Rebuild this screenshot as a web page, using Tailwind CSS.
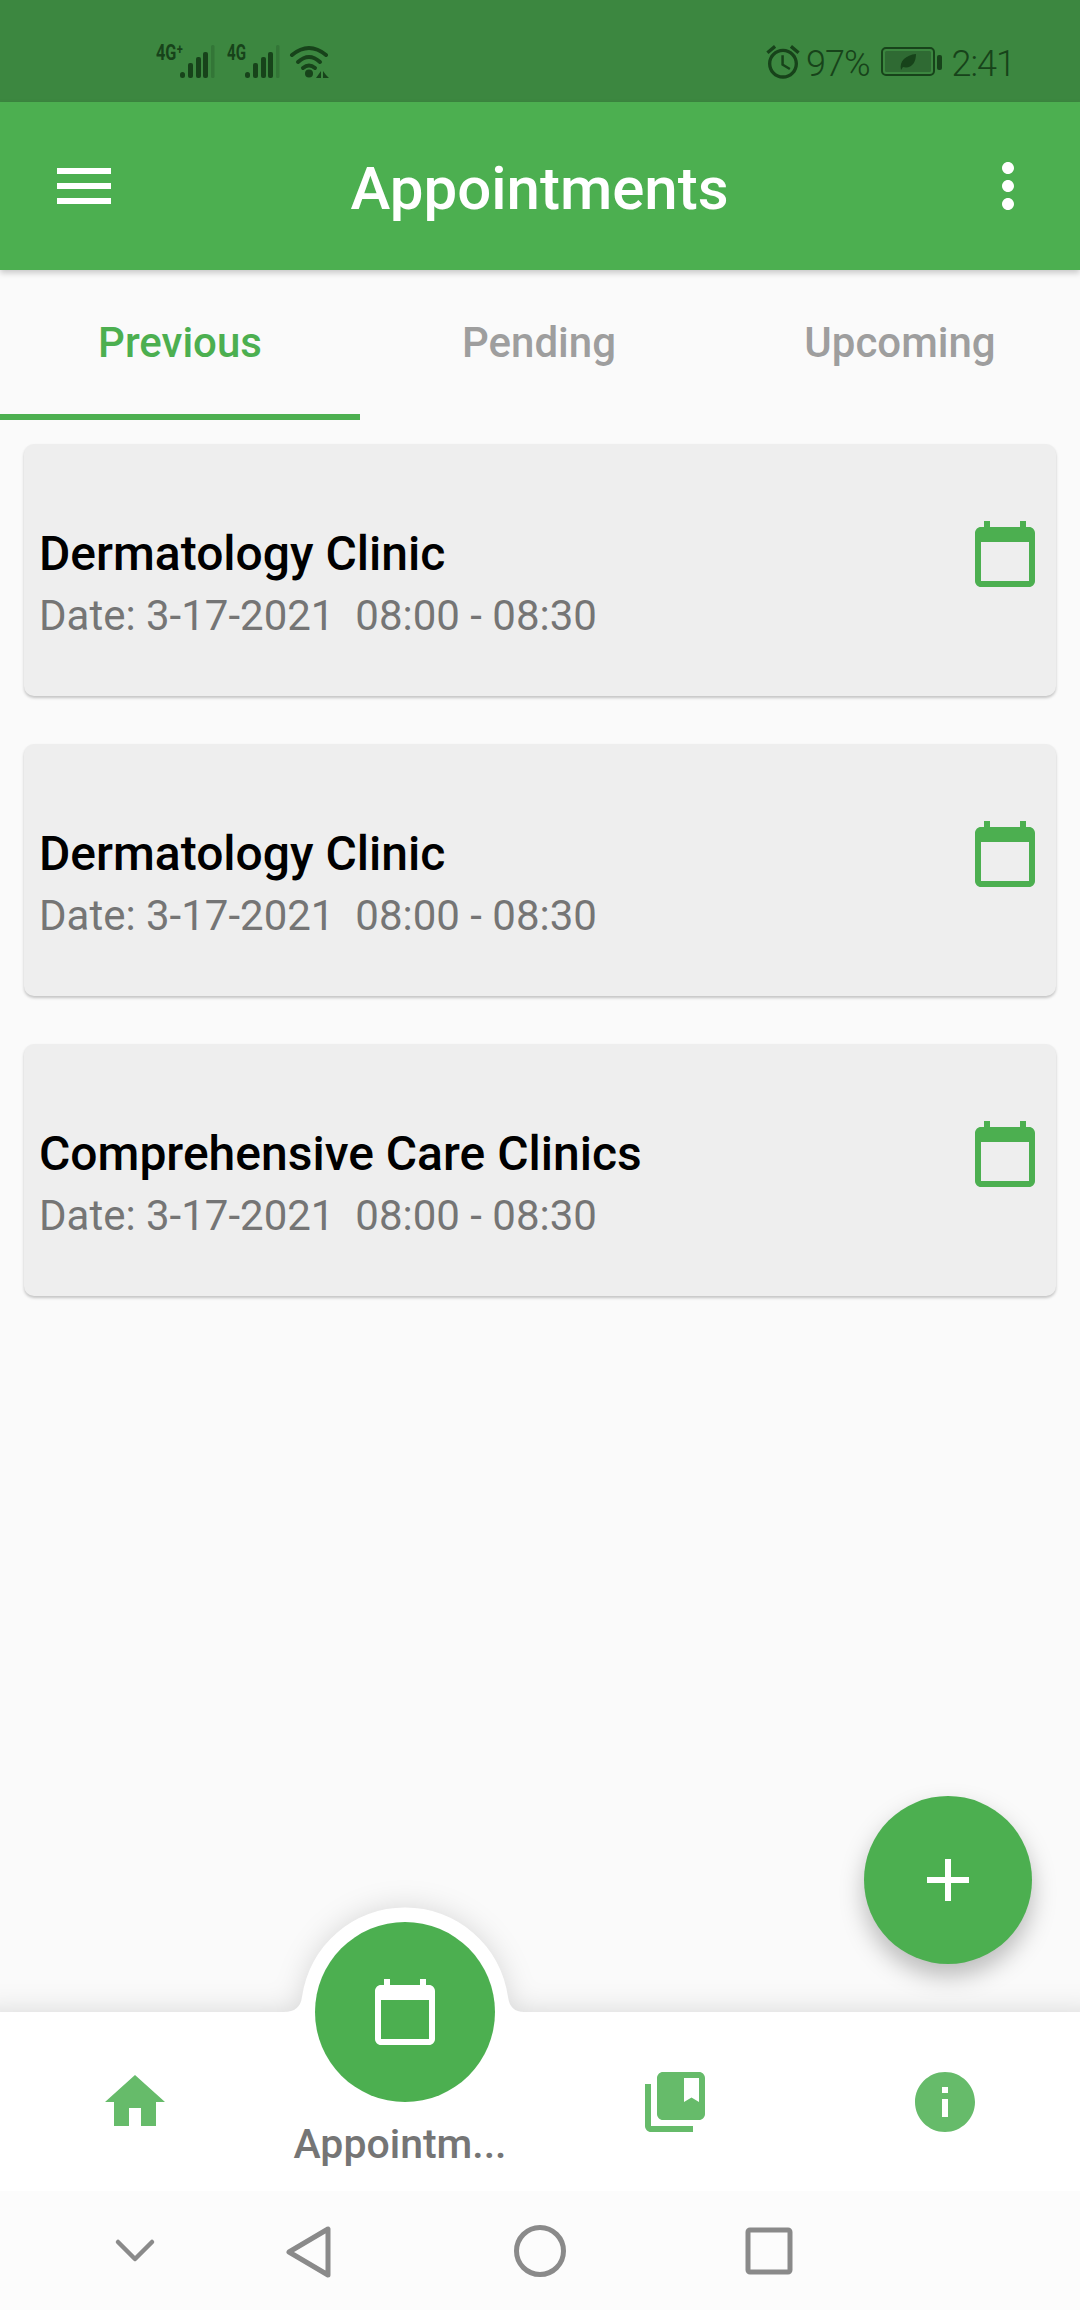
<!DOCTYPE html>
<html lang="en">
<head>
<meta charset="utf-8">
<title>Appointments</title>
<script src="https://cdn.jsdelivr.net/npm/@tailwindcss/browser@4"></script>
</head>
<body class="m-0 bg-[#fafafa]">
<div class="w-[1080px] h-[2310px] flex flex-col overflow-hidden bg-[#fafafa] font-['Roboto',sans-serif]">

  <!-- Status bar -->
  <div class="relative h-[102px] shrink-0 flex items-start justify-between bg-[#3c8740] pl-[156px] pr-[65px] text-[#17431a]">
    <svg class="mt-[40px]" width="175" height="40" viewBox="156 40 175 40" fill="#17431a">
      <text x="156" y="60" font-family="Roboto, 'DejaVu Sans', sans-serif" font-weight="700" font-size="22" textLength="27" lengthAdjust="spacingAndGlyphs">4G⁺</text>
      <rect x="180" y="72" width="5" height="6" rx="2.5"/><rect x="188" y="63" width="5" height="15" rx="2"/><rect x="196" y="57" width="5" height="21" rx="2"/><rect x="203" y="52" width="5" height="26" rx="2"/><rect x="211" y="45" width="3.5" height="33" rx="1.5" opacity=".25"/>
      <text x="227" y="60" font-family="Roboto, sans-serif" font-weight="700" font-size="22" textLength="19" lengthAdjust="spacingAndGlyphs">4G</text>
      <rect x="245" y="72" width="5" height="6" rx="2.5"/><rect x="253" y="63" width="5" height="15" rx="2"/><rect x="261" y="57" width="5" height="21" rx="2"/><rect x="268" y="52" width="5" height="26" rx="2"/><rect x="276" y="45" width="3.5" height="33" rx="1.5" opacity=".25"/>
      <g fill="none" stroke="#17431a" stroke-width="4" stroke-linecap="round">
        <path d="M292 55Q309 41 326 55"/><path d="M298 62Q309 52 320 62"/><path d="M303 68Q309 63 315 68"/>
      </g>
      <circle cx="309" cy="73.500" r="4"/>
      <path d="M321 71v7h-5zM323 71v7h6l-3 -3z"/>
    </svg>
    <div class="flex items-start">
      <svg class="mt-[42px] mr-[3px]" width="40" height="40" viewBox="0 0 24 24" fill="#17431a"><path d="M22 5.720l-4.600-3.860-1.290 1.530 4.600 3.860L22 5.720zM7.880 3.390L6.600 1.860 2 5.710l1.290 1.530 4.590-3.850zM12.500 8H11v6l4.750 2.850.75-1.230-4-2.370V8zM12 4c-4.970 0-9 4.030-9 9s4.030 9 9 9c4.970 0 9-4.030 9-9s-4.030-9-9-9zm0 16c-3.870 0-7-3.130-7-7s3.130-7 7-7 7 3.130 7 7-3.130 7-7 7z"/></svg>
      <span class="mt-[44px] text-[36px] leading-[40px] font-light tracking-[-1px] mr-[11px]">97%</span>
      <svg class="mt-[47px] mr-[9px]" width="62" height="30" viewBox="0 0 62 30">
        <rect x="1" y="1" width="52" height="27" rx="4" fill="none" stroke="#17431a" stroke-width="2"/>
        <rect x="4" y="4" width="46" height="21" rx="1.500" fill="#2f6a33"/>
        <rect x="56" y="8" width="5" height="15" rx="2" fill="#17431a"/>
        <path d="M20 23C18 14 25 8 35 7 35 16 30 22 22 20Z" fill="#17431a"/>
      </svg>
      <span class="mt-[44px] text-[36px] leading-[40px] font-light tracking-[-1px]">2:41</span>
    </div>
  </div>

  <!-- App bar -->
  <div class="relative z-10 h-[168px] shrink-0 flex items-center bg-[#4caf50] pl-[48px] pr-[36px] shadow-[0_3px_6px_rgba(0,0,0,0.2)]">
    <svg class="shrink-0" width="72" height="72" viewBox="0 0 24 24" fill="#fff"><path d="M3 18h18v-2H3v2zm0-5h18v-2H3v2zm0-7v2h18V6H3z"/></svg>
    <div class="flex-1 pt-[5px] pr-[13px] text-center text-white text-[60px] leading-[70px] font-medium">Appointments</div>
    <svg class="shrink-0" width="72" height="72" viewBox="0 0 24 24" fill="#fff"><path d="M12 8c1.100 0 2-.9 2-2s-.9-2-2-2-2 .9-2 2 .9 2 2 2zm0 2c-1.100 0-2 .9-2 2s.9 2 2 2 2-.9 2-2-.9-2-2-2zm0 6c-1.100 0-2 .9-2 2s.9 2 2 2 2-.9 2-2-.9-2-2-2z"/></svg>
  </div>

  <!-- Tabs -->
  <div class="h-[150px] shrink-0 grid grid-cols-3 text-center text-[42px] leading-[50px] font-medium">
    <div class="pt-[48px] border-b-[6px] border-[#4caf50] text-[#4caf50]">Previous</div>
    <div class="pt-[48px] pr-[2px] text-[#9e9e9e]">Pending</div>
    <div class="pt-[48px] text-[#9e9e9e]">Upcoming</div>
  </div>

  <!-- List -->
  <div class="relative flex-1 px-[24px] pt-[24px] flex flex-col gap-[48px]">
    <div class="h-[252px] rounded-[10px] bg-[#eeeeee] shadow-[0_2px_3px_rgba(0,0,0,0.22)] flex justify-between pl-[15px] pr-[15px]">
      <div class="pt-[82px]">
        <div class="text-[48px] leading-[56px] font-medium text-black">Dermatology Clinic</div>
        <div class="mt-[9px] text-[42px] leading-[50px] text-[#757575] whitespace-pre">Date: 3-17-2021  08:00 - 08:30</div>
      </div>
      <svg class="mt-[74px]" width="72" height="72" viewBox="0 0 24 24" fill="#4caf50"><path d="M20 3h-1V1h-2v2H7V1H5v2H4c-1.100 0-2 .9-2 2v16c0 1.100.9 2 2 2h16c1.100 0 2-.9 2-2V5c0-1.100-.9-2-2-2zm0 18H4V8h16v13z"/></svg>
    </div>
    <div class="h-[252px] rounded-[10px] bg-[#eeeeee] shadow-[0_2px_3px_rgba(0,0,0,0.22)] flex justify-between pl-[15px] pr-[15px]">
      <div class="pt-[82px]">
        <div class="text-[48px] leading-[56px] font-medium text-black">Dermatology Clinic</div>
        <div class="mt-[9px] text-[42px] leading-[50px] text-[#757575] whitespace-pre">Date: 3-17-2021  08:00 - 08:30</div>
      </div>
      <svg class="mt-[74px]" width="72" height="72" viewBox="0 0 24 24" fill="#4caf50"><path d="M20 3h-1V1h-2v2H7V1H5v2H4c-1.100 0-2 .9-2 2v16c0 1.100.9 2 2 2h16c1.100 0 2-.9 2-2V5c0-1.100-.9-2-2-2zm0 18H4V8h16v13z"/></svg>
    </div>
    <div class="h-[252px] rounded-[10px] bg-[#eeeeee] shadow-[0_2px_3px_rgba(0,0,0,0.22)] flex justify-between pl-[15px] pr-[15px]">
      <div class="pt-[82px]">
        <div class="text-[48px] leading-[56px] font-medium text-black">Comprehensive Care Clinics</div>
        <div class="mt-[9px] text-[42px] leading-[50px] text-[#757575] whitespace-pre">Date: 3-17-2021  08:00 - 08:30</div>
      </div>
      <svg class="mt-[74px]" width="72" height="72" viewBox="0 0 24 24" fill="#4caf50"><path d="M20 3h-1V1h-2v2H7V1H5v2H4c-1.100 0-2 .9-2 2v16c0 1.100.9 2 2 2h16c1.100 0 2-.9 2-2V5c0-1.100-.9-2-2-2zm0 18H4V8h16v13z"/></svg>
    </div>

    <!-- Floating action button -->
    <div class="absolute right-[48px] bottom-[48px] w-[168px] h-[168px] rounded-full bg-[#4caf50] flex items-center justify-center shadow-[0_12px_24px_rgba(0,0,0,0.26)]">
      <svg width="72" height="72" viewBox="0 0 24 24" fill="#fff"><path d="M19 13h-6v6h-2v-6H5v-2h6V5h2v6h6v2z"/></svg>
    </div>
  </div>

  <!-- Bottom navigation -->
  <div class="relative z-10 h-[179px] shrink-0">
    <svg class="absolute left-0 top-[-120px] overflow-visible drop-shadow-[0_0_14px_rgba(0,0,0,0.14)]" width="1080" height="299" viewBox="0 1892 1080 299" fill="#fff">
      <path d="M-20 2012H284Q300 2012 302 1997A104 104 0 0 1 508 1997Q510 2012 524 2012H1100V2191H-20Z"/>
    </svg>
    <div class="absolute left-[315px] top-[-90px] w-[180px] h-[180px] rounded-full bg-[#4caf50] flex items-center justify-center">
      <svg width="72" height="72" viewBox="0 0 24 24" fill="#fff"><path d="M20 3h-1V1h-2v2H7V1H5v2H4c-1.100 0-2 .9-2 2v16c0 1.100.9 2 2 2h16c1.100 0 2-.9 2-2V5c0-1.100-.9-2-2-2zm0 18H4V8h16v13z"/></svg>
    </div>
    <div class="relative grid grid-cols-4 justify-items-center">
      <div class="pt-[54px]">
        <svg width="72" height="72" viewBox="0 0 24 24" fill="#66bb6a"><path d="M10 20v-6h4v6h5v-8h3L12 3 2 12h3v8z"/></svg>
      </div>
      <div class="pt-[107px] pr-[10px] text-[41px] leading-[50px] font-medium text-[#757575]">Appointm...</div>
      <div class="pt-[54px]">
        <svg width="72" height="72" viewBox="0 0 24 24" fill="#66bb6a"><path d="M4 6H2v14c0 1.100.9 2 2 2h14v-2H4V6z"/><path d="M20 2H8c-1.100 0-2 .9-2 2v12c0 1.100.9 2 2 2h12c1.100 0 2-.9 2-2V4c0-1.100-.9-2-2-2zm0 10l-2.500-1.500L15 12V4h5v8z"/></svg>
      </div>
      <div class="pt-[54px]">
        <svg width="72" height="72" viewBox="0 0 24 24" fill="#66bb6a"><path d="M12 2C6.480 2 2 6.480 2 12s4.480 10 10 10 10-4.480 10-10S17.520 2 12 2zm1 15h-2v-6h2v6zm0-8h-2V7h2v2z"/></svg>
      </div>
    </div>
  </div>

  <!-- System navigation bar -->
  <div class="relative z-20 h-[119px] shrink-0 bg-[#fcfcfc]">
    <svg width="1080" height="119" viewBox="0 2191 1080 119" fill="none" stroke="#8a8a8a" stroke-width="5" stroke-linejoin="round" stroke-linecap="round">
      <path d="M118 2242L135 2259L152 2242" stroke-width="4.500"/>
      <path d="M328 2229V2275L289 2252Z"/>
      <circle cx="540" cy="2251" r="23.500"/>
      <rect x="748" y="2230" width="42" height="42" rx="2"/>
    </svg>
  </div>
</div>
</body>
</html>
